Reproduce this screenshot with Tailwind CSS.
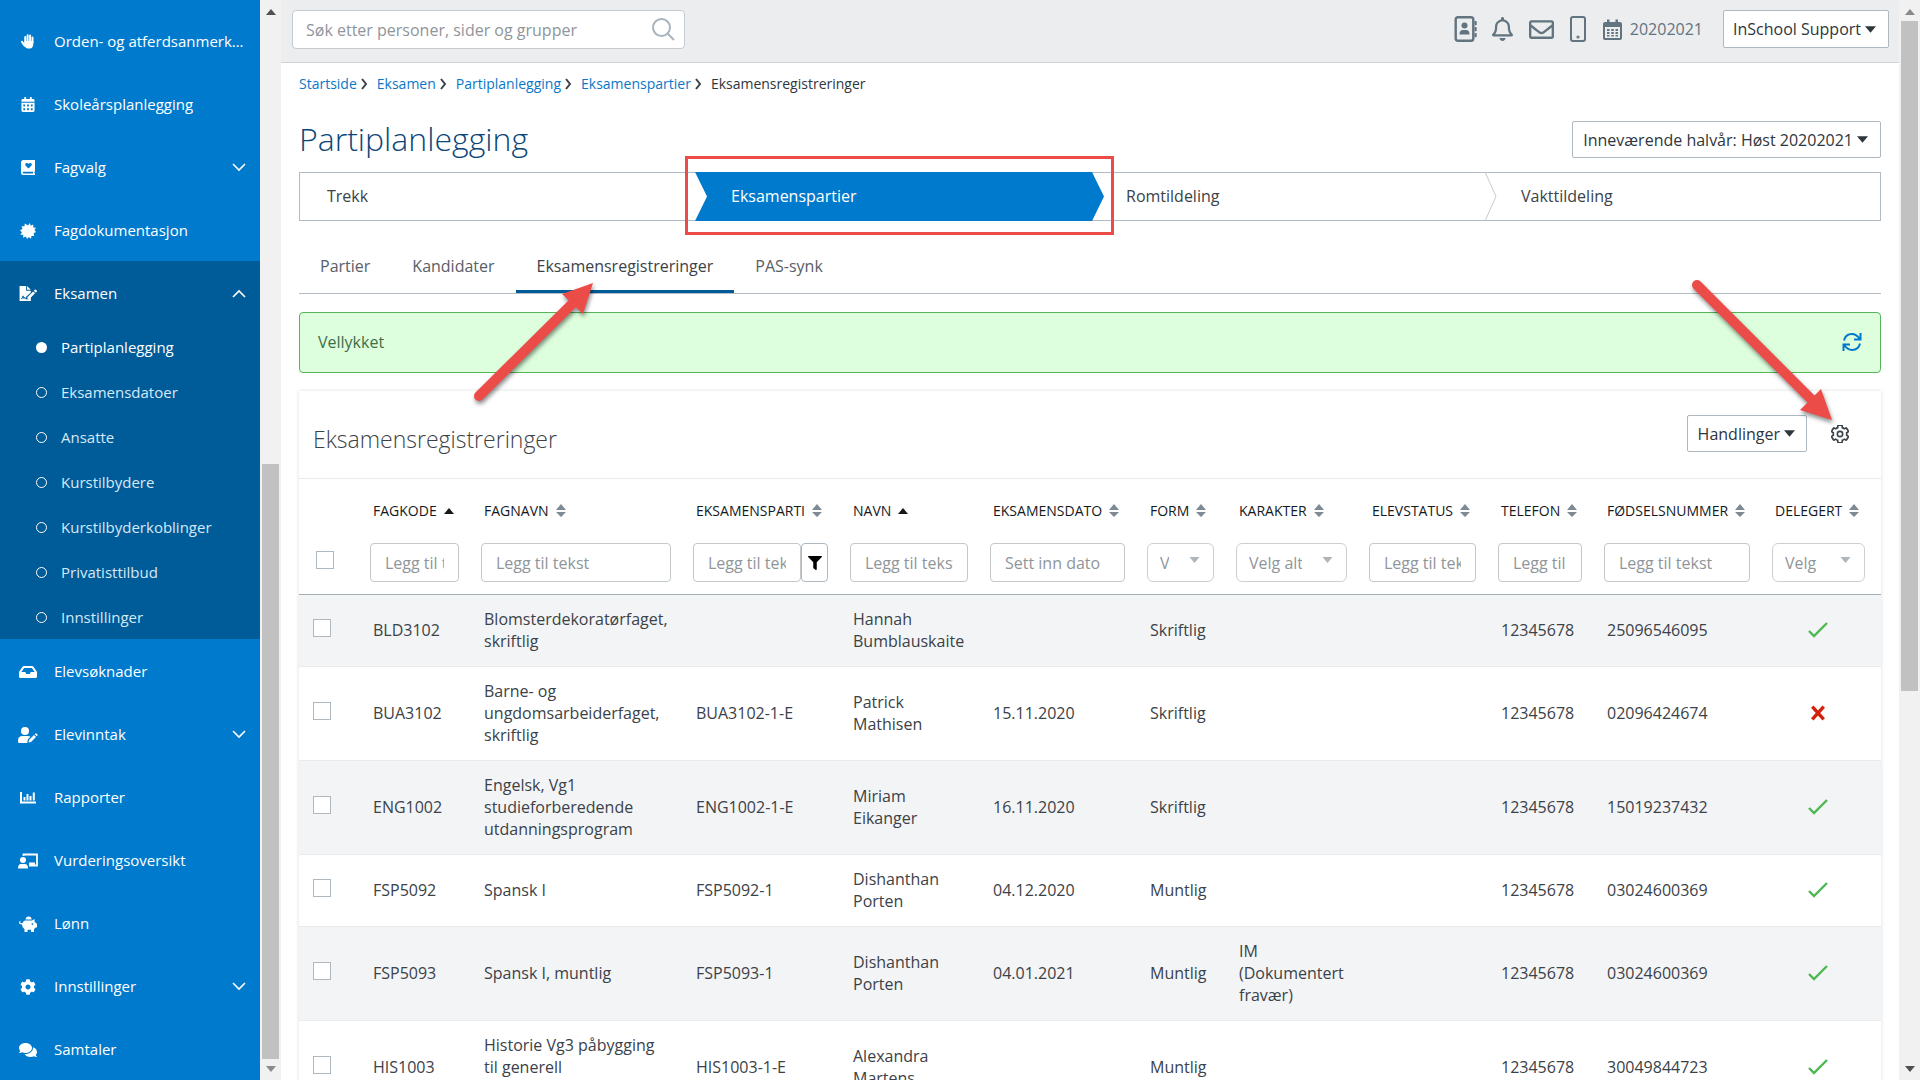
<!DOCTYPE html>
<html lang="no">
<head>
  <meta charset="UTF-8" />
  <meta name="viewport" content="width=device-width, initial-scale=1.0"/>
  <title>Partiplanlegging</title>
  <script src="https://cdn.jsdelivr.net/npm/@tailwindcss/browser@4"></script>
</head>
<body class="relative flex h-screen overflow-hidden bg-white font-['Open_Sans',sans-serif] text-base text-[#3b4248]">

  <!-- icons -->
  <svg class="hidden">
    <symbol id="calendar" viewBox="0 0 448 512"><path d="M0 464c0 26.5 21.5 48 48 48h352c26.5 0 48-21.5 48-48V192H0v272zm320-196c0-6.6 5.4-12 12-12h40c6.6 0 12 5.4 12 12v40c0 6.6-5.4 12-12 12h-40c-6.6 0-12-5.4-12-12v-40zm0 128c0-6.6 5.4-12 12-12h40c6.6 0 12 5.4 12 12v40c0 6.6-5.4 12-12 12h-40c-6.6 0-12-5.4-12-12v-40zM192 268c0-6.6 5.4-12 12-12h40c6.6 0 12 5.4 12 12v40c0 6.6-5.4 12-12 12h-40c-6.6 0-12-5.4-12-12v-40zm0 128c0-6.6 5.4-12 12-12h40c6.6 0 12 5.4 12 12v40c0 6.6-5.4 12-12 12h-40c-6.6 0-12-5.4-12-12v-40zM64 268c0-6.6 5.4-12 12-12h40c6.6 0 12 5.4 12 12v40c0 6.6-5.4 12-12 12H76c-6.6 0-12-5.4-12-12v-40zm0 128c0-6.6 5.4-12 12-12h40c6.6 0 12 5.4 12 12v40c0 6.6-5.4 12-12 12H76c-6.6 0-12-5.4-12-12v-40zM400 64h-48V16c0-8.8-7.2-16-16-16h-32c-8.8 0-16 7.2-16 16v48H160V16c0-8.8-7.2-16-16-16h-32c-8.8 0-16 7.2-16 16v48H48C21.5 64 0 85.5 0 112v48h448v-48c0-26.500-21.500-48-48-48z"/></symbol>
    <symbol id="down" viewBox="0 0 14 9"><path d="M1 1l6 6 6-6" fill="none" stroke="currentColor" stroke-width="1.6"/></symbol>
    <symbol id="up" viewBox="0 0 14 9"><path d="M1 8l6-6 6 6" fill="none" stroke="currentColor" stroke-width="1.6"/></symbol>
    <symbol id="caret" viewBox="0 0 10 6"><path d="M0 0h10L5 6z"/></symbol>
    <symbol id="caret-up" viewBox="0 0 10 6"><path d="M0 6h10L5 0z"/></symbol>
    <symbol id="sort" viewBox="0 0 10 13"><path d="M0 6h10L5 0zM0 8h10l-5 5z"/></symbol>
    <symbol id="crumb" viewBox="0 0 7 12"><path d="M1 1l4 5-4 5" fill="none" stroke="currentColor" stroke-width="2"/></symbol>
    <symbol id="check" viewBox="0 0 20 16"><path d="M1 9l5 5L19 1" fill="none" stroke="currentColor" stroke-width="2.400"/></symbol>
    <symbol id="cross" viewBox="0 0 14 14"><path d="M2 1.500l10 11M12 1.500L2 12.500" fill="none" stroke="currentColor" stroke-width="3"/></symbol>
    <symbol id="step" viewBox="0 0 12 49"><path d="M0 0l11 24.500L0 49" fill="none" stroke="currentColor" stroke-width="1"/></symbol>
  </svg>

  <!-- sidebar -->
  <nav class="flex w-[260px] shrink-0 flex-col bg-[#007acc] pt-[9px] text-[15px] text-white [&_a]:pt-0.5">
    <a href="#" class="flex h-[63px] shrink-0 items-center pl-[18px]">
      <svg class="mr-4 h-[15px] w-5" viewBox="0 0 20 20" fill="none" stroke="#fff" stroke-width="2.600" stroke-linecap="round"><path d="M6.300 11V4M9.500 10V1.600M12.800 10V2M16 11V4.500M2 10.500l3.500 5"/><path d="M6 10h10.500c0 5-.8 8.500-3.500 8.500H9.500c-2 0-3-2-4-4z" fill="#fff" stroke-width="1.500"/></svg>
      <span class="w-48 truncate">Orden- og atferdsanmerkninger</span>
    </a>
    <a href="#" class="flex h-[63px] shrink-0 items-center pl-[18px]">
      <svg class="mr-4 h-[15px] w-5 fill-white"><use href="#calendar"/></svg>
      Skoleårsplanlegging
    </a>
    <a href="#" class="flex h-[63px] shrink-0 items-center pr-[14px] pl-[18px]">
      <svg class="mr-4 h-[15px] w-5 fill-white" viewBox="0 0 14 15"><path fill-rule="evenodd" d="M2.500 0H13.500q.5 0 .5.500V11q0 .5-.5.600v1.800q.5.100.5.600v.5q0 .5-.5.500H2.500Q0 15 0 12.500v-10Q0 0 2.500 0zM2.500 11.700q-.8 0-.8.900t.8.900h9.500v-1.800zM7.500 8.500l3-3c1.200-1.600-1-3.700-3-1.800-2-1.900-4.200.2-3 1.800z"/></svg>
      Fagvalg
      <svg class="ml-auto h-[9px] w-[14px]"><use href="#down"/></svg>
    </a>
    <a href="#" class="flex h-[63px] shrink-0 items-center pl-[18px]">
      <svg class="mr-4 h-4 w-5 fill-white" viewBox="0 0 20 20"><path d="M10 3l2.300-3 1 3.500L16.500 1.800l.1 3.700 3.400.3-2 3 2 2.500-3 1.400.8 3.700-3.500-.3-.5 3.700-2.800-2.300L9 20l-1.900-3-3.200 1.500.2-3.700-3.700-.2 2-3.100L0 9l3.100-1.600L2 4l3.600.2L6 .5l3 2z"/></svg>
      Fagdokumentasjon
    </a>
    <div class="bg-[#005b99]">
      <a href="#" class="flex h-[63px] items-center pr-[14px] pl-[18px]">
        <svg class="mr-4 h-[15px] w-5 fill-white" viewBox="0 0 20 16"><path d="M1 0h7v5h5v2L8 11.500v2.500h2.600l2.400-2V16H1z"/><path d="M9 0l4 4H9zM9.300 12l6.200-6.200 2 2L11.300 14H9.300zM16.200 5l1-1q.6-.6 1.300 0l.8.800q.6.600 0 1.300l-1 1z"/><path d="M2.500 13.500h1l1.200-3 1 3 .8-1.500 1 1.500h2" fill="none" stroke="#005b99"/></svg>
        Eksamen
        <svg class="ml-auto h-[9px] w-[14px]"><use href="#up"/></svg>
      </a>
      <a href="#" class="flex h-[45px] items-center gap-[14px] pl-9"><span class="h-[11px] w-[11px] rounded-full bg-white"></span>Partiplanlegging</a>
      <a href="#" class="flex h-[45px] items-center gap-[14px] pl-9 text-[#d6e9f7]"><span class="h-[11px] w-[11px] rounded-full border border-white"></span>Eksamensdatoer</a>
      <a href="#" class="flex h-[45px] items-center gap-[14px] pl-9 text-[#d6e9f7]"><span class="h-[11px] w-[11px] rounded-full border border-white"></span>Ansatte</a>
      <a href="#" class="flex h-[45px] items-center gap-[14px] pl-9 text-[#d6e9f7]"><span class="h-[11px] w-[11px] rounded-full border border-white"></span>Kurstilbydere</a>
      <a href="#" class="flex h-[45px] items-center gap-[14px] pl-9 text-[#d6e9f7]"><span class="h-[11px] w-[11px] rounded-full border border-white"></span>Kurstilbyderkoblinger</a>
      <a href="#" class="flex h-[45px] items-center gap-[14px] pl-9 text-[#d6e9f7]"><span class="h-[11px] w-[11px] rounded-full border border-white"></span>Privatisttilbud</a>
      <a href="#" class="flex h-[45px] items-center gap-[14px] pl-9 text-[#d6e9f7]"><span class="h-[11px] w-[11px] rounded-full border border-white"></span>Innstillinger</a>
    </div>
    <a href="#" class="flex h-[63px] shrink-0 items-center pl-[18px]">
      <svg class="mr-4 h-4 w-5 fill-white" viewBox="0 0 576 512"><path d="M567.938 243.908L462.250 85.374A48.003 48.003 0 0 0 422.311 64H153.689a48 48 0 0 0-39.938 21.374L8.062 243.908A47.994 47.994 0 0 0 0 270.533V400c0 26.510 21.490 48 48 48h480c26.510 0 48-21.490 48-48V270.533a47.994 47.994 0 0 0-8.062-26.625zM162.252 128h251.497l85.333 128H376l-32 64H232l-32-64H76.918l85.334-128z"/></svg>
      Elevsøknader
    </a>
    <a href="#" class="flex h-[63px] shrink-0 items-center pr-[14px] pl-[18px]">
      <svg class="mr-4 h-4 w-5 fill-white" viewBox="0 0 20 16"><circle cx="7" cy="4" r="4"/><path d="M4.500 9h5q2 0 3 .8l-2.700 2.800-.5 3.400H1.500Q0 16 0 14.500V13.500Q0 9 4.500 9zM11 13l5-5 2 2-5 5-2.300.4zM16.700 7.300l.8-.8q.5-.4 1 0l1 1q.5.500 0 1l-.8.800z"/></svg>
      Elevinntak
      <svg class="ml-auto h-[9px] w-[14px]"><use href="#down"/></svg>
    </a>
    <a href="#" class="flex h-[63px] shrink-0 items-center pl-[18px]">
      <svg class="mr-4 h-4 w-5" viewBox="0 0 20 16" fill="none" stroke="#fff" stroke-width="2"><path d="M3 2v10.500h15M6.500 10.500V7M9.500 10.500V4M12.500 10.500V6M15.800 10.500V2.500"/></svg>
      Rapporter
    </a>
    <a href="#" class="flex h-[63px] shrink-0 items-center pl-[18px]">
      <svg class="mr-4 h-4 w-5 fill-white" viewBox="0 0 20 16"><circle cx="5" cy="7" r="3"/><path d="M3 11h4q3 0 3 4.500H0Q0 11 3 11z"/><path d="M5.500 3V1.500h13.500v11h-8M12 12v-1.500h4V12" fill="none" stroke="#fff" stroke-width="1.800"/></svg>
      Vurderingsoversikt
    </a>
    <a href="#" class="flex h-[63px] shrink-0 items-center pl-[18px]">
      <svg class="mr-4 h-4 w-5 fill-white" viewBox="0 0 20 16"><path fill-rule="evenodd" d="M7 4.500h7l2.500-1.500v2.500q1.200 1 1.600 2H19v4h-1.500q-.6 1-1.500 1.600V16h-3v-2.200H9.500V16h-3v-2.800Q4 11.500 4 8.500 1 8.700 1 6.600 1 5 2.500 5v1q-.6 0-.5.600.1.800 2.300.7Q5 5 7 4.500zM14.300 7.200a.8.800 0 1 0 .1 0z"/><path d="M7.500 3.500q.3-3 3.200-3 2.800 0 3 3z"/></svg>
      Lønn
    </a>
    <a href="#" class="flex h-[63px] shrink-0 items-center pr-[14px] pl-[18px]">
      <svg class="mr-4 h-4 w-5 fill-white" viewBox="0 0 512 512"><path d="M487.400 315.700l-42.600-24.600c4.300-23.200 4.300-47 0-70.200l42.600-24.600c4.900-2.800 7.100-8.600 5.500-14-11.100-35.600-30-67.800-54.700-94.600-3.800-4.100-10-5.100-14.800-2.300L380.800 110c-17.900-15.400-38.500-27.300-60.800-35.100V25.800c0-5.600-3.900-10.500-9.400-11.700-36.700-8.200-74.300-7.800-109.200 0-5.500 1.200-9.400 6.100-9.400 11.700V75c-22.200 7.900-42.800 19.800-60.800 35.100L88.700 85.500c-4.900-2.800-11-1.900-14.800 2.300-24.700 26.700-43.600 58.900-54.700 94.600-1.700 5.400.6 11.200 5.500 14L67.300 221c-4.300 23.200-4.300 47 0 70.200l-42.600 24.600c-4.900 2.800-7.100 8.600-5.500 14 11.100 35.600 30 67.800 54.700 94.600 3.800 4.100 10 5.100 14.800 2.300l42.600-24.600c17.900 15.400 38.500 27.300 60.800 35.100v49.200c0 5.600 3.900 10.500 9.400 11.700 36.700 8.200 74.300 7.800 109.200 0 5.500-1.200 9.400-6.100 9.400-11.700v-49.200c22.200-7.900 42.800-19.800 60.800-35.100l42.600 24.600c4.900 2.800 11 1.900 14.800-2.300 24.700-26.700 43.600-58.900 54.700-94.600 1.500-5.500-.7-11.300-5.600-14.100zM256 336c-44.100 0-80-35.900-80-80s35.900-80 80-80 80 35.900 80 80-35.900 80-80 80z"/></svg>
      Innstillinger
      <svg class="ml-auto h-[9px] w-[14px]"><use href="#down"/></svg>
    </a>
    <a href="#" class="flex h-[63px] shrink-0 items-center pl-[18px]">
      <svg class="mr-4 h-4 w-5 fill-white" viewBox="0 0 576 512"><path d="M416 192c0-88.400-93.100-160-208-160S0 103.600 0 192c0 34.300 14.100 65.900 38 92-13.400 30.200-35.500 54.200-35.800 54.500-2.200 2.300-2.800 5.700-1.500 8.700S4.800 352 8 352c36.600 0 66.900-12.300 88.700-25 32.200 15.700 70.300 25 111.300 25 114.900 0 208-71.600 208-160zm122 220c23.900-26 38-57.700 38-92 0-66.900-53.500-124.200-129.300-148.100.9 6.600 1.300 13.300 1.300 20.100 0 105.900-107.700 192-240 192-10.800 0-21.300-.8-31.700-1.900C207.800 439.600 281.800 480 368 480c41 0 79.100-9.200 111.300-25 21.800 12.700 52.100 25 88.700 25 3.200 0 6.100-1.900 7.300-4.800 1.300-2.900.7-6.300-1.500-8.700-.3-.3-22.400-24.200-35.800-54.500z"/></svg>
      Samtaler
    </a>
  </nav>
  <div class="flex w-[21px] shrink-0 flex-col items-center bg-[#f1f1f1] pt-[9px] pb-2">
    <svg class="h-[6px] w-[10px] fill-[#505050]"><use href="#caret-up"/></svg>
    <div class="mt-auto mb-[7px] h-[56%] w-[17px] bg-[#c1c1c1]"></div>
    <svg class="h-[6px] w-[10px] fill-[#8a8a8a]"><use href="#caret"/></svg>
  </div>

  <div class="min-w-0 flex-1">
    <!-- top bar -->
    <header class="flex h-[63px] items-start border-b border-[#cfd4d9] bg-[#ecedef] px-[10px] pt-[10px]">
      <div class="relative ml-px w-[393px]">
        <input type="text" aria-label="Søk" placeholder="Søk etter personer, sider og grupper" class="h-[39px] w-full rounded border border-[#c5cacf] bg-white pr-12 pl-[13px] placeholder:text-[#8f959a]"/>
        <svg class="absolute top-2 right-[10px] h-[23px] w-[23px] text-[#a9b4bd]" viewBox="0 0 23 23" fill="none" stroke="currentColor" stroke-width="2"><circle cx="9.500" cy="9.500" r="8.500"/><path d="M15.500 15.500l6.500 6.500"/></svg>
      </div>
      <div class="mr-5 ml-auto flex h-[38px] items-center text-[#62747f]">
        <svg class="mr-[15px] h-[26px] w-[23px]" viewBox="0 0 23 26" fill="currentColor"><path d="M4 1.200h13q2.300 0 2.300 2.300v19q0 2.300-2.300 2.300H4q-2.300 0-2.300-2.300v-19q0-2.300 2.300-2.300z" fill="none" stroke="currentColor" stroke-width="2.400"/><circle cx="10.500" cy="9.500" r="3"/><path d="M5.500 18.500q0-4.500 3.300-4.500h3.400q3.300 0 3.300 4.500zM20.500 5h1.500q.7 0 .7.700v2.800q0 .7-.7.700h-1.500zM20.500 11h1.500q.7 0 .7.700v2.800q0 .7-.7.700h-1.500zM20.500 17h1.500q.7 0 .7.700v2.800q0 .7-.7.700h-1.500z"/></svg>
        <svg class="mr-4 h-[24px] w-[21px]" viewBox="0 0 448 512" fill="currentColor"><path d="M439.390 362.290c-19.320-20.760-55.470-51.990-55.470-154.290 0-77.700-54.480-139.900-127.940-155.160V32c0-17.670-14.320-32-31.980-32s-31.980 14.330-31.980 32v20.840C118.560 68.100 64.080 130.300 64.080 208c0 102.300-36.150 133.530-55.470 154.290-6 6.450-8.660 14.160-8.610 21.710.11 16.400 12.980 32 32.100 32h383.800c19.120 0 32-15.600 32.100-32 .05-7.550-2.610-15.270-8.610-21.710zM67.530 368c21.220-27.970 44.420-74.330 44.530-159.420 0-.2-.06-.38-.06-.58 0-61.860 50.140-112 112-112s112 50.140 112 112c0 .2-.06.380-.06.580.11 85.100 23.310 131.460 44.530 159.420H67.530zM224 512c35.320 0 63.970-28.650 63.970-64H160.030c0 35.350 28.650 64 63.970 64z"/></svg>
        <svg class="mr-4 h-[25px] w-[25px]" viewBox="0 0 512 512" fill="currentColor"><path d="M464 64H48C21.490 64 0 85.490 0 112v288c0 26.510 21.490 48 48 48h416c26.510 0 48-21.490 48-48V112c0-26.510-21.490-48-48-48zm0 48v40.805c-22.422 18.259-58.168 46.651-134.587 106.490-16.841 13.247-50.201 45.072-73.413 44.701-23.208.375-56.579-31.459-73.413-44.701C106.180 199.465 70.425 171.067 48 152.805V112h416zM48 400V214.398c22.914 18.251 55.409 43.862 104.938 82.646 21.857 17.205 60.134 55.186 103.062 54.955 42.717.231 80.509-37.199 103.053-54.947 49.528-38.783 82.032-64.401 104.947-82.653V400H48z"/></svg>
        <svg class="mr-[17px] h-[26px] w-4" viewBox="0 0 16 26" fill="none" stroke="currentColor" stroke-width="2"><rect x="1" y="1" width="14" height="24" rx="2"/><circle cx="8" cy="21" r=".6"/></svg>
        <svg class="mr-2 h-[21px] w-[19px]" viewBox="0 0 19 21" fill="currentColor"><path fill-rule="evenodd" d="M2 3h2V.5h2.500V3h6V.5H15V3h2q2 0 2 2v14q0 2-2 2H2q-2 0-2-2V5q0-2 2-2zM2 8v11h15V8z"/><path d="M4 10h2.500v2H4zM8.300 10h2.500v2H8.300zM12.500 10H15v2h-2.500zM4 13h2.500v2H4zM8.300 13h2.500v2H8.300zM12.500 13H15v2h-2.500zM4 16h2.500v1.500H4zM8.300 16h2.500v1.500H8.300zM12.500 16H15v1.500h-2.500z"/></svg>
        <span>20202021</span>
      </div>
      <button class="flex h-[38px] items-center gap-1 rounded-xs border border-[#aeb8c0] bg-white pr-3 pl-[9px] font-medium text-[#2f363c]">InSchool Support <svg class="h-[7px] w-[11px]" fill="currentColor"><use href="#caret"/></svg></button>
    </header>

    <main class="px-[18px]">
      <nav class="flex h-[42px] items-center gap-[9px] text-sm text-[#0b77c9]">
        <span class="flex items-center gap-1"><a href="#">Startside</a><svg class="h-3 w-[7px] text-[#3b4248]"><use href="#crumb"/></svg></span>
        <span class="flex items-center gap-1"><a href="#">Eksamen</a><svg class="h-3 w-[7px] text-[#3b4248]"><use href="#crumb"/></svg></span>
        <span class="flex items-center gap-1"><a href="#">Partiplanlegging</a><svg class="h-3 w-[7px] text-[#3b4248]"><use href="#crumb"/></svg></span>
        <span class="flex items-center gap-1"><a href="#">Eksamenspartier</a><svg class="h-3 w-[7px] text-[#3b4248]"><use href="#crumb"/></svg></span>
        <span class="font-medium text-[#2f363c]">Eksamensregistreringer</span>
      </nav>

      <div class="flex h-[67px] items-center justify-between">
        <h1 class="text-[32px] font-light text-[#0b4679]">Partiplanlegging</h1>
        <button class="mt-0.5 flex h-[37px] items-center gap-1 rounded-xs border border-[#aeb8c0] pr-3 pl-[10px] font-medium text-[#2f363c]">Inneværende halvår: Høst 20202021 <svg class="h-[7px] w-[11px]" fill="currentColor"><use href="#caret"/></svg></button>
      </div>

      <!-- steps -->
      <ol class="grid h-[49px] grid-cols-4 border border-[#b3bcc4] [&_a]:pb-0.5">
        <li class="flex items-center pl-[27px]"><a href="#">Trekk</a></li>
        <li class="relative -my-px">
          <a href="#" class="-mr-[14px] flex h-[49px] items-center bg-[#007acc] pl-9 font-medium text-white [clip-path:polygon(0_0,calc(100%-12px)_0,100%_50%,calc(100%-12px)_100%,0_100%,12px_50%)]">Eksamenspartier</a>
          <div class="absolute -top-4 -right-6 -bottom-[14px] -left-[10px] border-3 border-[#ec4c47]"></div>
        </li>
        <li class="flex items-center pl-9"><a href="#">Romtildeling</a></li>
        <li class="-my-px flex items-center"><svg class="mr-6 h-[49px] w-3 text-[#c3cbd1]"><use href="#step"/></svg><a href="#">Vakttildeling</a></li>
      </ol>

      <!-- tabs -->
      <div class="mt-[18px] flex h-[55px] border-b border-[#b3bcc4] text-[#596066]">
        <a href="#" class="flex items-center px-[21px]">Partier</a>
        <a href="#" class="flex items-center px-[21px]">Kandidater</a>
        <a href="#" class="flex items-center border-b-3 border-[#005b99] px-[21px] pt-[3px] text-[#3b4248]">Eksamensregistreringer</a>
        <a href="#" class="flex items-center px-[21px]">PAS-synk</a>
      </div>

      <div class="mt-[18px] flex h-[61px] items-center justify-between rounded border border-[#55b559] bg-[#ddffdd] px-[18px] pb-0.5 text-[#3f6e4a]">
        Vellykket
        <button aria-label="Oppdater"><svg class="h-5 w-5 text-[#0079cc]" viewBox="0 0 20 20" fill="none" stroke="currentColor" stroke-width="2"><path d="M2 8.500Q3.500 2 10 2q4 0 7.500 4.500M18.500 1v6.500H12M18 11.500Q16.500 18 10 18q-4 0-7.500-4.500M1.500 19v-6.500H8"/></svg></button>
      </div>

      <section class="mt-[18px] shadow-[0_0_4px_rgba(0,0,0,0.14)]">
        <div class="flex h-[88px] items-center border-b border-[#e8eaec] pr-8 pb-0.5 pl-[14px]">
          <h2 class="pt-3 text-[23px] font-light">Eksamensregistreringer</h2>
          <button class="ml-auto flex h-[37px] items-center gap-1 rounded-xs border border-[#aeb8c0] pr-[11px] pl-[10px] font-medium text-[#2f363c]">Handlinger <svg class="h-[7px] w-[11px]" fill="currentColor"><use href="#caret"/></svg></button>
          <button aria-label="Kolonner" class="ml-6"><svg class="h-[18px] w-[18px] text-[#3b4248]" viewBox="0 0 512 512" fill="none" stroke="currentColor" stroke-width="46"><path d="M487.400 315.700l-42.600-24.600c4.300-23.200 4.300-47 0-70.200l42.600-24.600c4.900-2.800 7.100-8.600 5.500-14-11.100-35.600-30-67.800-54.700-94.600-3.800-4.100-10-5.100-14.800-2.300L380.800 110c-17.900-15.400-38.500-27.300-60.800-35.100V25.800c0-5.600-3.900-10.500-9.400-11.700-36.700-8.200-74.300-7.800-109.200 0-5.500 1.200-9.400 6.100-9.400 11.700V75c-22.200 7.900-42.800 19.800-60.800 35.100L88.700 85.500c-4.900-2.800-11-1.900-14.800 2.300-24.700 26.700-43.600 58.900-54.700 94.600-1.700 5.400.6 11.200 5.500 14L67.300 221c-4.300 23.200-4.300 47 0 70.200l-42.600 24.600c-4.900 2.800-7.100 8.600-5.500 14 11.100 35.600 30 67.800 54.700 94.600 3.800 4.100 10 5.100 14.800 2.300l42.600-24.600c17.900 15.400 38.500 27.300 60.800 35.100v49.200c0 5.600 3.900 10.500 9.400 11.700 36.700 8.200 74.300 7.800 109.200 0 5.500-1.200 9.400-6.100 9.400-11.700v-49.200c22.200-7.900 42.800-19.800 60.800-35.100l42.600 24.600c4.900 2.800 11 1.900 14.800-2.300 24.700-26.700 43.600-58.900 54.700-94.600 1.500-5.500-.7-11.300-5.600-14.100z"/><circle cx="256" cy="256" r="76"/></svg></button>
        </div>

        <table class="w-full table-fixed text-left leading-[22px]">
          <colgroup>
            <col class="w-[60px]"/><col class="w-[111px]"/><col class="w-[212px]"/><col class="w-[157px]"/><col class="w-[140px]"/><col class="w-[157px]"/><col class="w-[89px]"/><col class="w-[133px]"/><col class="w-[129px]"/><col class="w-[106px]"/><col class="w-[168px]"/><col class="w-[120px]"/>
          </colgroup>
          <thead>
            <tr class="h-16 text-sm whitespace-nowrap text-[#15191d] [&_th]:pl-[14px] [&_th]:font-medium [&_svg]:mb-[3px] [&_svg]:ml-[7px] [&_svg]:inline [&_svg]:w-[10px] [&_svg]:fill-[#7d8993]">
              <th></th>
              <th>FAGKODE<svg class="h-[6px] fill-[#15191d]!"><use href="#caret-up"/></svg></th>
              <th>FAGNAVN<svg class="h-[13px]"><use href="#sort"/></svg></th>
              <th>EKSAMENSPARTI<svg class="h-[13px]"><use href="#sort"/></svg></th>
              <th>NAVN<svg class="h-[6px] fill-[#15191d]!"><use href="#caret-up"/></svg></th>
              <th>EKSAMENSDATO<svg class="h-[13px]"><use href="#sort"/></svg></th>
              <th>FORM<svg class="h-[13px]"><use href="#sort"/></svg></th>
              <th>KARAKTER<svg class="h-[13px]"><use href="#sort"/></svg></th>
              <th>ELEVSTATUS<svg class="h-[13px]"><use href="#sort"/></svg></th>
              <th>TELEFON<svg class="h-[13px]"><use href="#sort"/></svg></th>
              <th>FØDSELSNUMMER<svg class="h-[13px]"><use href="#sort"/></svg></th>
              <th>DELEGERT<svg class="h-[13px]"><use href="#sort"/></svg></th>
            </tr>
            <tr class="h-[51px] border-b border-[#a3afb7] align-top [&_td]:px-[11px] [&_input[type=text]]:h-[39px] [&_input[type=text]]:w-full [&_input[type=text]]:rounded [&_input[type=text]]:border [&_input[type=text]]:border-[#c3c8cc] [&_input[type=text]]:px-[14px] [&_input]:placeholder:text-[#8f959a] [&_select]:h-[39px] [&_select]:w-full [&_select]:appearance-none [&_select]:rounded-md [&_select]:border [&_select]:border-[#cbd0d4] [&_select]:pr-11 [&_select]:pl-3 [&_select]:text-[#8f959a]">
              <td class="pt-2 pl-[17px]!"><input type="checkbox" aria-label="Velg alle" class="block h-[18px] w-[18px] appearance-none border border-[#aeb8c0] bg-white"/></td>
              <td><input type="text" aria-label="Fagkode" placeholder="Legg til tekst"/></td>
              <td><input type="text" aria-label="Fagnavn" placeholder="Legg til tekst"/></td>
              <td>
                <div class="flex">
                  <input type="text" aria-label="Eksamensparti" placeholder="Legg til tekst" class="min-w-0 flex-1"/>
                  <button aria-label="Filter" class="flex h-[39px] w-[27px] shrink-0 items-center justify-center rounded border border-[#aeb8c0]"><svg class="h-[14px] w-[14px]" viewBox="0 0 512 512"><path d="M487.976 0H24.028C2.710 0-8.047 25.866 7.058 40.971L192 225.941V432c0 7.831 3.821 15.170 10.237 19.662l80 55.980C298.020 518.690 320 507.493 320 487.980V225.941l184.947-184.970C520.021 25.896 509.338 0 487.976 0z"/></svg></button>
                </div>
              </td>
              <td><input type="text" aria-label="Navn" placeholder="Legg til tekst"/></td>
              <td><input type="text" aria-label="Eksamensdato" placeholder="Sett inn dato"/></td>
              <td><div class="relative"><select aria-label="Form"><option>Velg alternativ</option></select><svg class="absolute top-[14px] right-[14px] h-[6px] w-[11px] fill-[#aeb4b9]"><use href="#caret"/></svg></div></td>
              <td><div class="relative"><select aria-label="Karakter"><option>Velg alternativ</option></select><svg class="absolute top-[14px] right-[14px] h-[6px] w-[11px] fill-[#aeb4b9]"><use href="#caret"/></svg></div></td>
              <td><input type="text" aria-label="Elevstatus" placeholder="Legg til tekst"/></td>
              <td><input type="text" aria-label="Telefon" placeholder="Legg til tekst"/></td>
              <td><input type="text" aria-label="Fødselsnummer" placeholder="Legg til tekst"/></td>
              <td class="pr-4!"><div class="relative"><select aria-label="Delegert"><option>Velg alternativ</option></select><svg class="absolute top-[14px] right-[14px] h-[6px] w-[11px] fill-[#aeb4b9]"><use href="#caret"/></svg></div></td>
            </tr>
          </thead>
          <tbody class="[&_tr]:border-b [&_tr]:border-[#e8eaec] [&_tr:nth-child(odd)]:bg-[#f3f4f6] [&_td]:pt-[13px] [&_td]:pr-3 [&_td]:pb-[14px] [&_td]:pl-[14px] [&_td:last-child]:pr-5 [&_input]:mb-1 [&_input]:block [&_input]:h-[18px] [&_input]:w-[18px] [&_input]:appearance-none [&_input]:border [&_input]:border-[#aeb8c0] [&_input]:bg-white [&_svg]:mx-auto">
            <tr>
              <td><input type="checkbox" aria-label="Velg BLD3102"/></td>
              <td>BLD3102</td>
              <td>Blomsterdekoratørfaget, skriftlig</td>
              <td></td>
              <td>Hannah Bumblauskaite</td>
              <td></td>
              <td>Skriftlig</td>
              <td></td>
              <td></td>
              <td>12345678</td>
              <td>25096546095</td>
              <td><svg class="h-4 w-5 text-[#4db851]"><use href="#check"/></svg></td>
            </tr>
            <tr>
              <td><input type="checkbox" aria-label="Velg BUA3102"/></td>
              <td>BUA3102</td>
              <td>Barne- og ungdomsarbeiderfaget, skriftlig</td>
              <td>BUA3102-1-E</td>
              <td>Patrick Mathisen</td>
              <td>15.11.2020</td>
              <td>Skriftlig</td>
              <td></td>
              <td></td>
              <td>12345678</td>
              <td>02096424674</td>
              <td><svg class="h-4 w-4 text-[#d3210b]"><use href="#cross"/></svg></td>
            </tr>
            <tr>
              <td><input type="checkbox" aria-label="Velg ENG1002"/></td>
              <td>ENG1002</td>
              <td>Engelsk, Vg1 studieforberedende utdanningsprogram</td>
              <td>ENG1002-1-E</td>
              <td>Miriam Eikanger</td>
              <td>16.11.2020</td>
              <td>Skriftlig</td>
              <td></td>
              <td></td>
              <td>12345678</td>
              <td>15019237432</td>
              <td><svg class="h-4 w-5 text-[#4db851]"><use href="#check"/></svg></td>
            </tr>
            <tr>
              <td><input type="checkbox" aria-label="Velg FSP5092"/></td>
              <td>FSP5092</td>
              <td>Spansk I</td>
              <td>FSP5092-1</td>
              <td>Dishanthan Porten</td>
              <td>04.12.2020</td>
              <td>Muntlig</td>
              <td></td>
              <td></td>
              <td>12345678</td>
              <td>03024600369</td>
              <td><svg class="h-4 w-5 text-[#4db851]"><use href="#check"/></svg></td>
            </tr>
            <tr>
              <td><input type="checkbox" aria-label="Velg FSP5093"/></td>
              <td>FSP5093</td>
              <td>Spansk I, muntlig</td>
              <td>FSP5093-1</td>
              <td>Dishanthan Porten</td>
              <td>04.01.2021</td>
              <td>Muntlig</td>
              <td>IM (Dokumentert fravær)</td>
              <td></td>
              <td>12345678</td>
              <td>03024600369</td>
              <td><svg class="h-4 w-5 text-[#4db851]"><use href="#check"/></svg></td>
            </tr>
            <tr>
              <td><input type="checkbox" aria-label="Velg HIS1003"/></td>
              <td>HIS1003</td>
              <td>Historie Vg3 påbygging til generell studiekompetanse</td>
              <td>HIS1003-1-E</td>
              <td>Alexandra Martens</td>
              <td></td>
              <td>Muntlig</td>
              <td></td>
              <td></td>
              <td>12345678</td>
              <td>30049844723</td>
              <td><svg class="h-4 w-5 text-[#4db851]"><use href="#check"/></svg></td>
            </tr>
          </tbody>
        </table>
      </section>
    </main>
  </div>

  <div class="flex w-[21px] shrink-0 flex-col items-center bg-[#f1f1f1] pt-[9px] pb-2">
    <svg class="h-[6px] w-[10px] fill-[#8a8a8a]"><use href="#caret-up"/></svg>
    <div class="mt-[6px] mb-auto h-[63%] w-[17px] bg-[#c1c1c1]"></div>
    <svg class="h-[6px] w-[10px] fill-[#505050]"><use href="#caret"/></svg>
  </div>

  <!-- arrows -->
  <svg class="absolute top-[275px] left-[470px] h-[135px] w-[135px] fill-[#ec4c47] stroke-[#ec4c47] drop-shadow-[1px_3px_2px_rgba(0,0,0,0.45)]" viewBox="0 0 135 135">
    <path d="M9 121L104 27" stroke-width="10" stroke-linecap="round"/>
    <path d="M123 8L92 19l21 20z" stroke="none"/>
  </svg>
  <svg class="absolute top-[275px] right-[77px] h-[155px] w-[160px] fill-[#ec4c47] stroke-[#ec4c47] drop-shadow-[1px_3px_2px_rgba(0,0,0,0.45)]" viewBox="0 0 160 155">
    <path d="M14 10L130 126" stroke-width="10" stroke-linecap="round"/>
    <path d="M149 145l-11-31-21 21z" stroke="none"/>
  </svg>
</body>
</html>
